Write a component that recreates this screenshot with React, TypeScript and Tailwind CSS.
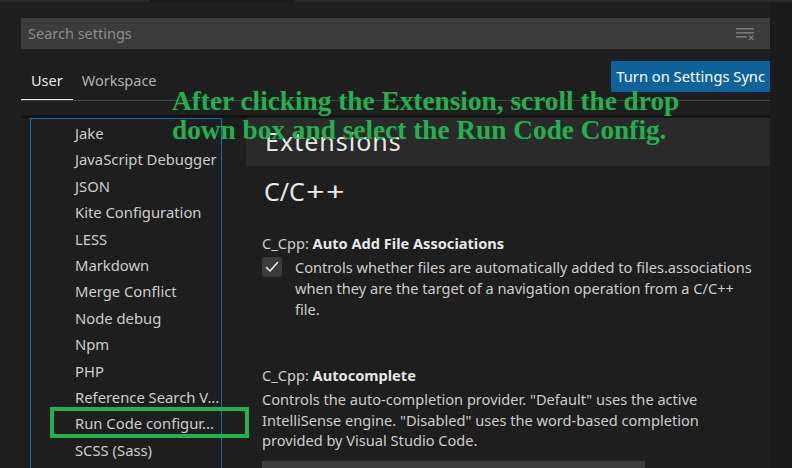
import React from "react";

const toc = [
  "Jake",
  "JavaScript Debugger",
  "JSON",
  "Kite Configuration",
  "LESS",
  "Markdown",
  "Merge Conflict",
  "Node debug",
  "Npm",
  "PHP",
  "Reference Search V...",
  "Run Code configur...",
  "SCSS (Sass)",
];

function ClearIcon() {
  return (
    <svg width="19" height="14" viewBox="0 0 19 14" fill="none">
      <rect x="0" y="1" width="18" height="1.6" fill="#7a7a7a" />
      <rect x="0" y="5" width="18" height="1.6" fill="#7a7a7a" />
      <rect x="0" y="9" width="11" height="1.6" fill="#7a7a7a" />
      <path d="M13 8.5 L17.5 13 M17.5 8.5 L13 13" stroke="#7a7a7a" strokeWidth="1.4" />
    </svg>
  );
}

function Check() {
  return (
    <div className="w-[20px] h-[20px] rounded-[3px] bg-[#3c3c3c] flex items-center justify-center shrink-0">
      <svg width="16" height="16" viewBox="0 0 16 16" fill="none">
        <path d="M2.5 8.5 L6 12 L13.5 3.5" stroke="#e8e8e8" strokeWidth="1.6" strokeLinecap="round" strokeLinejoin="round" />
      </svg>
    </div>
  );
}

export default function App() {
  return (
    <div
      className="w-[792px] h-[468px] bg-[#1e1e1e] overflow-hidden relative flex flex-col text-[#cccccc]"
      style={{ fontFamily: '"Noto Sans", "Open Sans", sans-serif' }}
    >
      <div className="flex h-[2px] shrink-0">
        <div className="w-[150px] bg-[#2b2b2b]" />
        <div className="w-[145px] bg-[#1a1a1a]" />
        <div className="flex-1 bg-[#2b2b2b]" />
      </div>
      <div className="flex flex-1 min-h-0">
        <div className="w-[770px] pl-[21px] flex flex-col">
          <div className="h-[16px] shrink-0" />
          <div className="h-[31px] bg-[#3c3c3c] flex items-center justify-between pl-[7px] pr-[15px] shrink-0">
            <span className="text-[14.5px] text-[#8b8b8b]">Search settings</span>
            <ClearIcon />
          </div>
          <div className="h-[52px] border-b border-[#454545] flex items-start justify-between shrink-0">
            <div className="flex h-[51px]">
              <div className="px-[10px] pt-[21px] leading-[20px] text-[14.5px] text-[#e7e7e7] border-b border-[#e7e7e7]">
                User
              </div>
              <div className="px-[9px] pt-[21px] leading-[20px] text-[14.5px] text-[#b0b0b0]">
                Workspace
              </div>
            </div>
            <div className="mt-[12px] h-[31px] bg-[#0e639c] text-white text-[14.7px] flex items-center px-[5px]">
              Turn on Settings Sync
            </div>
          </div>
          <div className="h-[14px] shrink-0" />
          <div className="h-[3px] bg-[#121212] shrink-0" />
          <div className="flex flex-1 min-h-0">
            <div className="ml-[9px] w-[192px] border border-b-0 border-[#0e70c0] pl-[44px] pt-[1px] flex flex-col text-[14.8px] text-[#cccccc]">
              {toc.map((t) => (
                <div key={t} className="leading-[26.4px] whitespace-nowrap">
                  {t}
                </div>
              ))}
            </div>
            <div className="ml-[24px] flex-1 flex flex-col">
              <div className="h-[48px] bg-[#2a2a2a] pl-[19px] flex items-center text-[25px] tracking-[1px] text-[#e7e7e7] shrink-0">
                Extensions
              </div>
              <div className="pl-[16px] flex flex-col">
                <div className="mt-[9px] text-[25px] leading-[32px] text-[#e7e7e7] pl-[2px] whitespace-nowrap">
                  C/C
                  <span className="inline-block origin-left scale-x-[1.3] tracking-[1px] ml-[1px]">++</span>
                </div>
                <div className="mt-[26px] text-[14.6px] leading-[20px]">
                  C_Cpp: <span className="font-bold text-[#e7e7e7]">Auto Add File Associations</span>
                </div>
                <div className="mt-[4px] flex gap-[13px]">
                  <Check />
                  <div className="text-[14.6px] leading-[21px] whitespace-nowrap">
                    Controls whether files are automatically added to files.associations
                    <br />
                    when they are the target of a navigation operation from a C/C++
                    <br />
                    file.
                  </div>
                </div>
                <div className="mt-[45px] text-[14.6px] leading-[20px]">
                  C_Cpp: <span className="font-bold text-[#e7e7e7]">Autocomplete</span>
                </div>
                <div className="mt-[4px] text-[14.6px] leading-[20.5px] whitespace-nowrap">
                  Controls the auto-completion provider. "Default" uses the active
                  <br />
                  IntelliSense engine. "Disabled" uses the word-based completion
                  <br />
                  provided by Visual Studio Code.
                </div>
                <div className="mt-[10px] h-[26px] w-[383px] bg-[#3c3c3c]" />
              </div>
            </div>
          </div>
        </div>
        <div className="flex-1 bg-[#1b1b1b]" />
      </div>

      <div
        className="absolute left-[172px] top-[87px] text-[27.3px] leading-[29px] font-bold text-[#22b14c] whitespace-nowrap"
        style={{ fontFamily: '"Liberation Serif", serif' }}
      >
        After clicking the Extension, scroll the drop
        <br />
        down box and select the Run Code Config.
      </div>
      <div className="absolute left-[50px] top-[407px] w-[199px] h-[31px] border-[4px] border-[#22b14c]" />
    </div>
  );
}
